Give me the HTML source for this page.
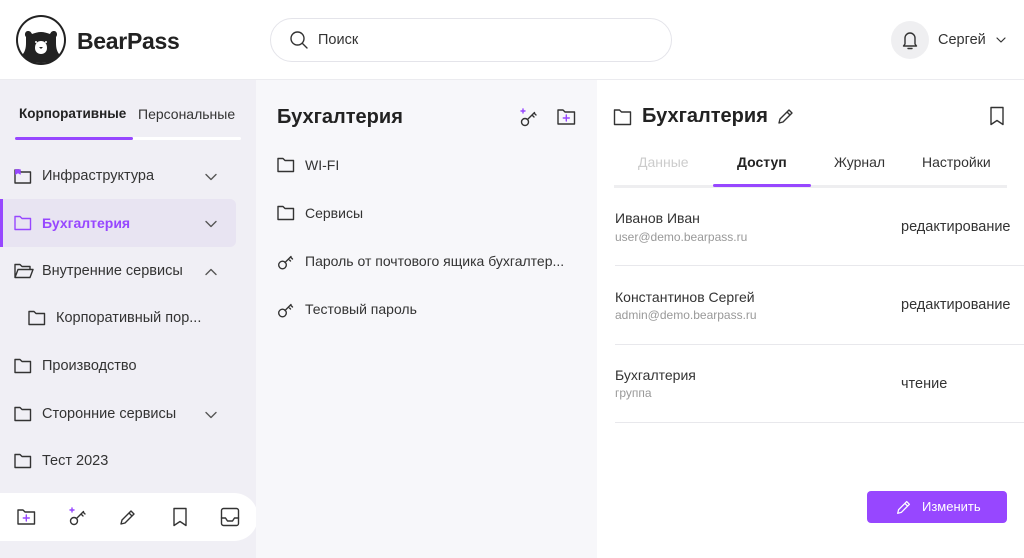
<!DOCTYPE html>
<html><head><meta charset="utf-8"><style>
*{box-sizing:border-box;margin:0;padding:0}
body{width:1024px;height:558px;overflow:hidden;font-family:"Liberation Sans",sans-serif;color:#222;background:#fff;position:relative}
.abs{position:absolute}
.hdr{left:0;top:0;width:1024px;height:80px;background:#fff;border-bottom:1px solid #ebebef}
.side{left:0;top:80px;width:256px;height:478px;background:#f0eff5}
.mid{left:256px;top:80px;width:341px;height:478px;background:#f7f7fa}
.t{position:absolute;white-space:nowrap}
svg{position:absolute;fill:none;stroke:#333;stroke-width:1.4;stroke-linecap:round;stroke-linejoin:round}
</style></head><body>
<div class="abs hdr"></div>
<svg style="left:15px;top:14px" width="52" height="52" viewBox="0 0 52 52"><circle cx="26" cy="26" r="25" fill="#222" stroke="none"/><circle cx="26" cy="26" r="23" fill="#fff" stroke="none"/><path d="M26 49c-9 0-15-3-19-8 3-3 4-7 4-12v-6c-2-2-1-6 2-6 2 0 3 1 4 3 3-1 6-2 9-2s6 1 9 2c1-2 2-3 4-3 3 0 4 4 2 6v6c0 5 1 9 4 12-4 5-10 8-19 8z" fill="#222" stroke="none"/><path d="M20 34c0-5 3-7 6-7s6 2 6 7c0 4-3 6-6 6s-6-2-6-6z" fill="#fff" stroke="none"/><path d="M24 33h4l-2 2z" fill="#222" stroke="none"/><circle cx="21" cy="28" r="1" fill="#fff" stroke="none"/><circle cx="31" cy="28" r="1" fill="#fff" stroke="none"/></svg>
<div class="t" style="left:77px;top:28px;font-size:23px;font-weight:bold;color:#222;letter-spacing:-0.3px">BearPass</div>
<div class="abs" style="left:270px;top:18px;width:402px;height:44px;border:1px solid #e4e4ea;border-radius:22px;background:#fff"></div>
<svg style="left:289px;top:30px" width="20" height="20" viewBox="0 0 20 20"><circle cx="8.5" cy="8.5" r="6.5"/><path d="M13.5 13.5l4.5 4.5"/></svg>
<div class="t" style="left:318px;top:32px;font-size:14.5px;color:#333">Поиск</div>
<div class="abs" style="left:891px;top:21px;width:38px;height:38px;border-radius:50%;background:#efeff1"></div>
<svg style="left:901px;top:30px" width="18" height="20" viewBox="0 0 18 20"><path d="M4 14V8a5 5 0 0 1 10 0v6l1.5 2h-13z M7 18.5h4"/></svg>
<div class="t" style="left:938px;top:32px;font-size:14.5px;color:#333">Сергей</div>
<svg style="left:996px;top:36px" width="10" height="8" viewBox="0 0 10 8"><path d="M1 2l4 4 4-4" stroke-width="1.2"/></svg>

<div class="abs side"></div>
<div class="t" style="left:19px;top:106px;font-size:13.5px;font-weight:bold;color:#222">Корпоративные</div>
<div class="t" style="left:138px;top:106px;font-size:14px;color:#333">Персональные</div>
<div class="abs" style="left:15px;top:137px;width:226px;height:3px;background:#fff;border-radius:2px"></div>
<div class="abs" style="left:15px;top:137px;width:118px;height:3px;background:#9747ff;border-radius:2px"></div>

<div class="abs" style="left:0;top:199px;width:236px;height:48px;background:#e8e4f2;border-radius:0 6px 6px 0"></div>
<div class="abs" style="left:0;top:199px;width:3px;height:48px;background:#9747ff"></div>

<svg style="left:14px;top:168px" width="18" height="16" viewBox="0 0 18 16"><path d="M1 2h4l2 2h9.5v11H1z"/><path d="M1.5 1.5h5v5l-2.5-1.5-2.5 1.5z" fill="#9747ff" stroke="#9747ff" stroke-width="0.5"/></svg>
<div class="t" style="left:42px;top:168px;font-size:14.5px;color:#333">Инфраструктура</div>
<svg style="left:205px;top:173px" width="12" height="8" viewBox="0 0 12 8"><path d="M1 1.5l5 5 5-5" stroke="#555"/></svg>

<svg style="left:14px;top:215px" width="18" height="16" viewBox="0 0 18 16"><path d="M1 1.5h5l2 2h8.5v11H1z" stroke="#9747ff"/></svg>
<div class="t" style="left:42px;top:215px;font-size:14px;font-weight:bold;color:#9747ff">Бухгалтерия</div>
<svg style="left:205px;top:220px" width="12" height="8" viewBox="0 0 12 8"><path d="M1 1.5l5 5 5-5" stroke="#555"/></svg>

<svg style="left:14px;top:263px" width="20" height="16" viewBox="0 0 20 16"><path d="M1 14.5V1.5h5l2 2h8v3M1 14.5l3-8h15l-3 8z"/></svg>
<div class="t" style="left:42px;top:263px;font-size:14.5px;color:#333">Внутренние сервисы</div>
<svg style="left:205px;top:268px" width="12" height="8" viewBox="0 0 12 8"><path d="M1 6.5l5-5 5 5" stroke="#555"/></svg>

<svg style="left:28px;top:310px" width="18" height="16" viewBox="0 0 18 16"><path d="M1 1.5h5l2 2h8.5v11H1z"/></svg>
<div class="t" style="left:56px;top:310px;font-size:14.5px;color:#333">Корпоративный пор...</div>

<svg style="left:14px;top:358px" width="18" height="16" viewBox="0 0 18 16"><path d="M1 1.5h5l2 2h8.5v11H1z"/></svg>
<div class="t" style="left:42px;top:358px;font-size:14.5px;color:#333">Производство</div>

<svg style="left:14px;top:406px" width="18" height="16" viewBox="0 0 18 16"><path d="M1 1.5h5l2 2h8.5v11H1z"/></svg>
<div class="t" style="left:42px;top:406px;font-size:14.5px;color:#333">Сторонние сервисы</div>
<svg style="left:205px;top:411px" width="12" height="8" viewBox="0 0 12 8"><path d="M1 1.5l5 5 5-5" stroke="#555"/></svg>

<svg style="left:14px;top:453px" width="18" height="16" viewBox="0 0 18 16"><path d="M1 1.5h5l2 2h8.5v11H1z"/></svg>
<div class="t" style="left:42px;top:453px;font-size:14.5px;color:#333">Тест 2023</div>

<div class="abs" style="left:0;top:493px;width:258px;height:48px;background:#fff;border-radius:0 24px 24px 0"></div>
<svg style="left:17px;top:508px" width="20" height="18" viewBox="0 0 20 18"><path d="M1 2h5l2 2h9.5v12H1z"/><path d="M9.3 7v6M6.3 10h6" stroke="#9747ff"/></svg>
<svg style="left:68px;top:506px" width="22" height="22" viewBox="0 0 22 22"><circle cx="6" cy="15" r="3.5"/><path d="M8.5 12.5l7-7M13 8l2 2M15 6l2 2" /><path d="M4 2v4M2 4h4" stroke="#9747ff"/></svg>
<svg style="left:118px;top:507px" width="20" height="20" viewBox="0 0 20 20"><path d="M3 17l1-4 9-9 3 3-9 9zM11 6l3 3"/></svg>
<svg style="left:172px;top:507px" width="16" height="20" viewBox="0 0 16 20"><path d="M2 1.5h12v17l-6-4-6 4z"/></svg>
<svg style="left:220px;top:507px" width="20" height="20" viewBox="0 0 20 20"><rect x="1.5" y="1.5" width="17" height="17" rx="2"/><path d="M1.5 11h4l2 3h5l2-3h4"/></svg>

<div class="abs mid"></div>
<div class="t" style="left:277px;top:106px;font-size:20px;font-weight:bold;color:#222">Бухгалтерия</div>
<svg style="left:519px;top:108px" width="22" height="20" viewBox="0 0 22 20"><circle cx="6" cy="14" r="3.5"/><path d="M8.5 11.5l7-7M13 7l2 2M15 5l2 2"/><path d="M4 1v4M2 3h4" stroke="#9747ff"/></svg>
<svg style="left:557px;top:108px" width="20" height="18" viewBox="0 0 20 18"><path d="M1 2h5l2 2h9.5v12H1z"/><path d="M9.3 7v6M6.3 10h6" stroke="#9747ff"/></svg>

<svg style="left:277px;top:157px" width="18" height="16" viewBox="0 0 18 16"><path d="M1 1.5h5l2 2h8.5v11H1z"/></svg>
<div class="t" style="left:305px;top:157px;font-size:14px;color:#333">WI-FI</div>
<svg style="left:277px;top:205px" width="18" height="16" viewBox="0 0 18 16"><path d="M1 1.5h5l2 2h8.5v11H1z"/></svg>
<div class="t" style="left:305px;top:205px;font-size:14px;color:#333">Сервисы</div>
<svg style="left:277px;top:253px" width="20" height="18" viewBox="0 0 20 18"><circle cx="5.5" cy="12" r="3.8"/><path d="M8 9.5l6-6M11.5 6l2 2M13.5 4l2 2"/></svg>
<div class="t" style="left:305px;top:253px;font-size:14px;color:#333">Пароль от почтового ящика бухгалтер...</div>
<svg style="left:277px;top:301px" width="20" height="18" viewBox="0 0 20 18"><circle cx="5.5" cy="12" r="3.8"/><path d="M8 9.5l6-6M11.5 6l2 2M13.5 4l2 2"/></svg>
<div class="t" style="left:305px;top:301px;font-size:14px;color:#333">Тестовый пароль</div>

<svg style="left:613px;top:108px" width="20" height="18" viewBox="0 0 20 18"><path d="M1.5 2h5l2 2h9v12.5h-16z"/></svg>
<div class="t" style="left:642px;top:105px;font-size:20px;font-weight:bold;color:#222">Бухгалтерия</div>
<svg style="left:776px;top:106px" width="20" height="20" viewBox="0 0 20 20"><path d="M3 17l1-4 9-9 3 3-9 9zM11 6l3 3"/></svg>
<svg style="left:989px;top:106px" width="16" height="20" viewBox="0 0 16 20"><path d="M2 1.5h12v17l-6-4-6 4z"/></svg>

<div class="t" style="left:638px;top:154px;font-size:14px;color:#ccc">Данные</div>
<div class="t" style="left:737px;top:154px;font-size:14px;font-weight:bold;color:#222">Доступ</div>
<div class="t" style="left:834px;top:154px;font-size:14px;color:#333">Журнал</div>
<div class="t" style="left:922px;top:154px;font-size:14px;color:#333">Настройки</div>
<div class="abs" style="left:614px;top:185px;width:393px;height:3px;background:#eeeef0"></div>
<div class="abs" style="left:713px;top:184px;width:98px;height:3px;background:#9747ff;border-radius:2px"></div>

<div class="t" style="left:615px;top:210px;font-size:14px;color:#333">Иванов Иван</div>
<div class="t" style="left:615px;top:230px;font-size:12px;color:#999">user@demo.bearpass.ru</div>
<div class="t" style="left:901px;top:219px;font-size:14.5px;color:#333">редактирование</div>
<div class="abs" style="left:615px;top:265px;width:409px;height:1px;background:#e8e8ec"></div>
<div class="t" style="left:615px;top:289px;font-size:14px;color:#333">Константинов Сергей</div>
<div class="t" style="left:615px;top:308px;font-size:12px;color:#999">admin@demo.bearpass.ru</div>
<div class="t" style="left:901px;top:297px;font-size:14.5px;color:#333">редактирование</div>
<div class="abs" style="left:615px;top:344px;width:409px;height:1px;background:#e8e8ec"></div>
<div class="t" style="left:615px;top:367px;font-size:14px;color:#333">Бухгалтерия</div>
<div class="t" style="left:615px;top:386px;font-size:12px;color:#999">группа</div>
<div class="t" style="left:901px;top:376px;font-size:14.5px;color:#333">чтение</div>
<div class="abs" style="left:615px;top:422px;width:409px;height:1px;background:#e8e8ec"></div>

<div class="abs" style="left:867px;top:491px;width:140px;height:32px;background:#9747ff;border-radius:4px"></div>
<svg style="left:895px;top:498px" width="18" height="18" viewBox="0 0 20 20"><path d="M3 17l1-4 9-9 3 3-9 9zM11 6l3 3" stroke="#fff"/></svg>
<div class="t" style="left:922px;top:499px;font-size:13px;color:#fff">Изменить</div>
</body></html>
